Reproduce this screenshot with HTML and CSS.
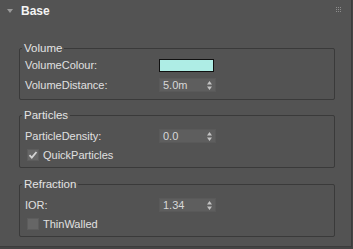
FILE: index.html
```
<!DOCTYPE html>
<html>
    <head>
        <title>Base rollout</title>
        <link rel="stylesheet" href="styles.css">
    </head>
    <body>
        <div class="panel">
            <div class="header">
                <svg class="arrow" width="6" height="4" viewBox="0 0 6 4"><path d="M0 0H6L3 4Z" fill="#9a9a9a"/></svg>
                <span class="title">Base</span>
                <svg class="grip" width="6" height="6" viewBox="0 0 6 6">
                    <g fill="#8c8c8c">
                        <rect x="0" y="0" width="1" height="1"/><rect x="2" y="0" width="1" height="1"/><rect x="4" y="0" width="1" height="1"/>
                        <rect x="0" y="2" width="1" height="1"/><rect x="2" y="2" width="1" height="1"/><rect x="4" y="2" width="1" height="1"/>
                        <rect x="0" y="4" width="1" height="1"/><rect x="2" y="4" width="1" height="1"/><rect x="4" y="4" width="1" height="1"/>
                    </g>
                </svg>
            </div>

            <fieldset class="group first">
                <legend>Volume</legend>
                <div class="row">
                    <span class="label">VolumeColour:</span>
                    <div class="swatch"></div>
                </div>
                <div class="row">
                    <span class="label">VolumeDistance:</span>
                    <div class="spinner"><span>5.0m</span><svg width="5" height="9" viewBox="0 0 5 9"><path d="M0 3.5H5L2.5 0Z M0 5.5H5L2.5 9Z" fill="#c4c4c4"/></svg></div>
                </div>
            </fieldset>

            <fieldset class="group">
                <legend>Particles</legend>
                <div class="row">
                    <span class="label">ParticleDensity:</span>
                    <div class="spinner"><span>0.0</span><svg width="5" height="9" viewBox="0 0 5 9"><path d="M0 3.5H5L2.5 0Z M0 5.5H5L2.5 9Z" fill="#c4c4c4"/></svg></div>
                </div>
                <div class="row check">
                    <div class="box"><svg width="10" height="10" viewBox="0 0 10 10"><path d="M1.5 5.2L3.8 7.6L8.5 2" fill="none" stroke="#d4d4d4" stroke-width="1.8"/></svg></div>
                    <span class="label">QuickParticles</span>
                </div>
            </fieldset>

            <fieldset class="group last">
                <legend>Refraction</legend>
                <div class="row">
                    <span class="label">IOR:</span>
                    <div class="spinner"><span>1.34</span><svg width="5" height="9" viewBox="0 0 5 9"><path d="M0 3.5H5L2.5 0Z M0 5.5H5L2.5 9Z" fill="#c4c4c4"/></svg></div>
                </div>
                <div class="row check">
                    <div class="box"></div>
                    <span class="label">ThinWalled</span>
                </div>
            </fieldset>
        </div>
    </body>
</html>
```

FILE: styles.css
```
body {
    margin: 0;
    background: #444444;
    font-family: "Liberation Sans", Arial, sans-serif;
    font-size: 11px;
    color: #e0e0e0;
}
.panel {
    width: 352px;
    height: 247px;
    box-sizing: border-box;
    background: #535353;
    border-right: 1px solid #3c3c3c;
    border-bottom: 1px solid #3c3c3c;
    overflow: hidden;
}
.header {
    display: flex;
    align-items: center;
    height: 22px;
    padding: 0 8px 0 7px;
    margin-bottom: 19px;
}
.arrow {
    margin-top: -1px;
}
.title {
    margin-left: 8px;
    font-size: 12px;
    font-weight: bold;
    color: #f4f4f4;
}
.grip {
    margin-left: auto;
    margin-right: 1px;
    margin-top: -2px;
}
.group {
    margin: 8px 16px 0 19px;
    padding: 6px 5px 5px 5px;
    border: 1px solid #3a3a3a;
    border-radius: 2px;
    display: flex;
    flex-direction: column;
    gap: 4px;
}
.group.first {
    margin-top: 0;
    padding-top: 2px;
    padding-bottom: 6px;
}
.group.last {
    margin-top: 9px;
}
.group legend {
    margin-left: -3px;
    padding: 0 2px;
    line-height: 14px;
    font-size: 11.5px;
    color: #e4e4e4;
}
.row {
    display: grid;
    grid-template-columns: 134px auto;
    align-items: center;
    height: 16px;
}
.row.check {
    display: flex;
    height: 14px;
    gap: 4px;
    padding-left: 2px;
}
.swatch {
    width: 53px;
    height: 11px;
    background: #aeede5;
    border: 1px solid #101010;
}
.spinner {
    display: flex;
    align-items: center;
    justify-content: space-between;
    width: 57px;
    height: 14px;
    box-sizing: border-box;
    padding: 0 3px 0 3px;
    background: #5e5e5e;
    border: 1px solid #595959;
    color: #d8d8d8;
}
.box {
    width: 12px;
    height: 12px;
    background: #666666;
    border: 1px solid #5c5c5c;
    box-sizing: border-box;
    display: flex;
    align-items: center;
    justify-content: center;
}
```
